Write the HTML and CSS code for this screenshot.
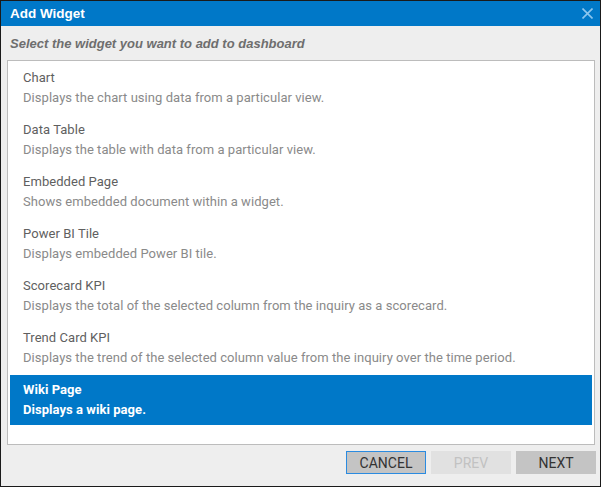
FILE: index.html
```html
<!DOCTYPE html>
<html>
<head>
<meta charset="utf-8">
<link rel="stylesheet" href="styles.css">
</head>
<body>
<div class="dialog">
  <div class="titlebar">
    <span class="title">Add Widget</span>
    <span class="close"><svg width="11" height="11" viewBox="0 0 11 11"><path d="M0.5 0.5 L10.5 10.5 M10.5 0.5 L0.5 10.5" stroke="#8cc6ee" stroke-width="1.6" fill="none"/></svg></span>
  </div>
  <div class="subtitle">Select the widget you want to add to dashboard</div>
  <div class="list">
    <div class="item"><div class="name">Chart</div><div class="desc">Displays the chart using data from a particular view.</div></div>
    <div class="item"><div class="name">Data Table</div><div class="desc">Displays the table with data from a particular view.</div></div>
    <div class="item"><div class="name">Embedded Page</div><div class="desc">Shows embedded document within a widget.</div></div>
    <div class="item"><div class="name">Power BI Tile</div><div class="desc">Displays embedded Power BI tile.</div></div>
    <div class="item"><div class="name">Scorecard KPI</div><div class="desc">Displays the total of the selected column from the inquiry as a scorecard.</div></div>
    <div class="item"><div class="name">Trend Card KPI</div><div class="desc">Displays the trend of the selected column value from the inquiry over the time period.</div></div>
    <div class="item selected"><div class="name">Wiki Page</div><div class="desc">Displays a wiki page.</div></div>
  </div>
  <div class="footer">
    <button class="btn focused">CANCEL</button>
    <button class="btn disabled">PREV</button>
    <button class="btn">NEXT</button>
  </div>
</div>
</body>
</html>
```
FILE: styles.css
```css
html, body {
  margin: 0;
  padding: 0;
  background: #eeeeee;
}
.dialog {
  width: 601px;
  height: 487px;
  box-sizing: border-box;
  border: 1px solid #1a1a1a;
  background: #eeeeee;
  display: flex;
  flex-direction: column;
  font-family: "Liberation Sans", Arial, sans-serif;
}
.titlebar {
  height: 25px;
  background: #0078c8;
  display: flex;
  align-items: center;
  justify-content: space-between;
  padding: 0 7px 0 9px;
}
.title {
  color: #ffffff;
  font-weight: bold;
  font-size: 13.5px;
}
.close {
  display: flex;
  align-items: center;
  height: 11px;
}
.subtitle {
  height: 34px;
  line-height: 35px;
  padding-left: 9px;
  font-style: italic;
  font-size: 13px;
  color: #6e6e6e;
  font-weight: bold;
}
.list {
  margin: 0 5px 0 6px;
  height: 385px;
  box-sizing: border-box;
  border: 1px solid #bcbcbc;
  background: #ffffff;
  padding: 2px;
  display: flex;
  flex-direction: column;
  gap: 2px;
}
.item {
  height: 50px;
  box-sizing: border-box;
  padding: 6px 0 0 13px;
  font-family: Roboto, "Liberation Sans", sans-serif;
  font-size: 13px;
  letter-spacing: 0.05px;
}
.name {
  color: #5f5f5f;
  line-height: 17px;
  font-weight: 400;
}
.desc {
  color: #8a8a8a;
  line-height: 17px;
  margin-top: 3px;
}
.item.selected {
  background: #0078c8;
}
.item.selected .name,
.item.selected .desc {
  color: #ffffff;
  font-weight: bold;
}
.footer {
  display: flex;
  justify-content: flex-end;
  gap: 5px;
  padding: 6px 4px 0 0;
}
.btn {
  width: 80px;
  height: 23px;
  box-sizing: border-box;
  border: 1px solid transparent;
  background: #c4c4c4;
  color: #333333;
  font-family: Roboto, "Liberation Sans", sans-serif;
  font-size: 14px;
  padding: 0;
  margin: 0;
}
.btn.focused {
  border-color: #2b8be0;
}
.btn.disabled {
  background: #e1e1e1;
  color: #c2c2c2;
}
```
